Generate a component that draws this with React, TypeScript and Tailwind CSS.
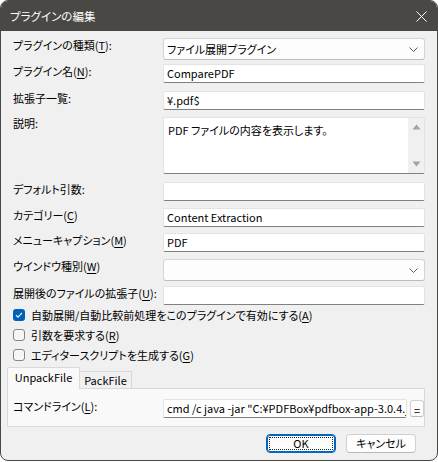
import React from "react";

const U = ({ c }: { c: string }) => <span className="underline underline-offset-[2px]">{c}</span>;

const Chevron = () => (
  <svg width="9" height="5" viewBox="0 0 9 5" className="block">
    <path d="M0.5 0.5 L4.5 4.5 L8.5 0.5" fill="none" stroke="#5a5a5a" strokeWidth="1" />
  </svg>
);

const Input = ({ value, h = "h-[19px]" }: { value?: string; h?: string }) => (
  <div
    className={`${h} w-full flex items-center overflow-hidden whitespace-nowrap rounded-[2px] border border-[#e3e3e3] border-b-[#808080] bg-white pl-[3px] leading-[15px]`}
  >
    {value}
  </div>
);

const Select = ({ value }: { value?: string }) => (
  <div className="flex h-[22px] w-full items-center justify-between rounded-[3px] border border-[#d4d4d4] border-b-[#bdbdbd] bg-[#fdfdfd] pl-[3px] pr-[6px] leading-[15px]">
    <span>{value}</span>
    <Chevron />
  </div>
);

const Row = ({ label, mt, children }: { label: React.ReactNode; mt: string; children: React.ReactNode }) => (
  <div className={`flex items-start ${mt}`}>
    <div className="w-[150px] shrink-0 leading-[15px] whitespace-nowrap">{label}</div>
    <div className="w-[262px]">{children}</div>
  </div>
);

const Check = ({ checked, children }: { checked?: boolean; children: React.ReactNode }) => (
  <div className="flex h-[20px] items-center gap-[6px] whitespace-nowrap">
    {checked ? (
      <div className="flex h-[12px] w-[12px] items-center justify-center rounded-[3px] bg-[#005fb8]">
        <svg width="10" height="10" viewBox="0 0 10 10">
          <path d="M2 5.2 L4 7.1 L8 2.9" fill="none" stroke="#fff" strokeWidth="1.1" />
        </svg>
      </div>
    ) : (
      <div className="h-[12px] w-[12px] rounded-[3px] border border-[#858585] bg-[#f6f6f6]" />
    )}
    <span className="leading-[15px]">{children}</span>
  </div>
);

export default function App() {
  return (
    <div className="h-[462px] w-[438px] bg-white font-['Noto_Sans_CJK_JP','Noto_Sans',sans-serif] text-[11px] text-black [font-feature-settings:'palt']">
      <div className="flex h-[461px] flex-col overflow-hidden rounded-[8px] border border-[#4a4845] bg-[#f0f0f0]">
        {/* Title bar */}
        <div className="flex h-[30px] shrink-0 items-center justify-between bg-[#4a4845] pl-[9px] pr-[10px] text-white">
          <span className="text-[11.5px] leading-[15px]">プラグインの編集</span>
          <svg width="11" height="11" viewBox="0 0 11 11">
            <path d="M0.5 0.5 L10.5 10.5 M10.5 0.5 L0.5 10.5" stroke="#ffffff" strokeWidth="1" />
          </svg>
        </div>

        {/* Body */}
        <div className="flex flex-col px-[12px]">
          <Row mt="mt-[7px]" label={<>プラグインの種類(<U c="T" />):</>}>
            <Select value="ファイル展開プラグイン" />
          </Row>
          <Row mt="mt-[4px]" label={<>プラグイン名(<U c="N" />):</>}>
            <Input value="ComparePDF" />
          </Row>
          <Row mt="mt-[8px]" label="拡張子一覧:">
            <Input value="¥.pdf$" />
          </Row>
          <Row mt="mt-[7px]" label={<span className="relative top-[-1px]">説明:</span>}>
            <div className="flex h-[57px] w-full rounded-[2px] border border-[#e3e3e3] border-b-[#808080] bg-white">
              <div className="flex-1 pl-[4px] pt-[5px] leading-[15px]">PDF ファイルの内容を表示します。</div>
              <div className="flex w-[16px] flex-col items-center justify-between bg-[#f0f0f0] py-[6px]">
                <svg width="9" height="6" viewBox="0 0 9 6">
                  <path d="M4.5 0.5 L8.5 5.5 L0.5 5.5 Z" fill="#a3a3a3" />
                </svg>
                <svg width="9" height="6" viewBox="0 0 9 6">
                  <path d="M0.5 0.5 L8.5 0.5 L4.5 5.5 Z" fill="#a3a3a3" />
                </svg>
              </div>
            </div>
          </Row>
          <Row mt="mt-[8px]" label="デフォルト引数:">
            <Input />
          </Row>
          <Row mt="mt-[7px]" label={<>カテゴリー(<U c="C" />)</>}>
            <Input value="Content Extraction" />
          </Row>
          <Row mt="mt-[6px]" label={<>メニューキャプション(<U c="M" />)</>}>
            <Input value="PDF" />
          </Row>
          <Row mt="mt-[7px]" label={<>ウインドウ種別(<U c="W" />)</>}>
            <Select />
          </Row>
          <Row mt="mt-[5px]" label={<>展開後のファイルの拡張子(<U c="U" />):</>}>
            <Input />
          </Row>

          <div className="flex flex-col">
            <Check checked>
              自動展開/自動比較前処理をこのプラグインで有効にする(<U c="A" />)
            </Check>
            <Check>
              引数を要求する(<U c="R" />)
            </Check>
            <Check>
              エディタースクリプトを生成する(<U c="G" />)
            </Check>
          </div>

          {/* Tabs */}
          <div className="ml-[-6px] mt-[2px] flex flex-col">
            <div className="flex items-end">
              <div className="relative z-10 mb-[-1px] flex h-[22px] w-[73px] items-center justify-center rounded-t-[2px] border border-b-0 border-[#d9d9d9] bg-[#f9f9f9] pb-[2px] leading-[15px]">
                UnpackFile
              </div>
              <div className="flex h-[17px] w-[52px] items-center justify-center border border-b-0 border-l-0 border-[#d9d9d9] bg-[#f0f0f0] leading-[15px]">
                PackFile
              </div>
            </div>
            <div className="flex h-[39px] items-start border border-[#d9d9d9] bg-[#f9f9f9] pl-[5px] pt-[10px]">
              <div className="w-[150px] shrink-0 leading-[15px] whitespace-nowrap">
                コマンドライン(<U c="L" />):
              </div>
              <div className="w-[244px] overflow-hidden">
                <Input value={'cmd /c java -jar "C:¥PDFBox¥pdfbox-app-3.0.4.jar" export:text -i "%1" -o "%2"'} />
              </div>
              <div className="ml-[3px] mt-[1px] flex h-[17px] w-[14px] items-center justify-center rounded-[3px] border border-[#d0d0d0] border-b-[#b8b8b8] bg-[#fdfdfd] pt-[2px] leading-[12px]">
                =
              </div>
            </div>
          </div>

          {/* Buttons */}
          <div className="mt-[7px] flex justify-end gap-[10px] pr-[9px]">
            <div className="flex h-[19px] w-[70px] items-center justify-center rounded-[4px] border border-[#0067c0] bg-[#fdfdfd] p-[2px] shadow-[inset_0_0_0_1px_#0067c0]">
              <div className="flex h-full w-full items-center justify-center border border-dotted border-[#222] leading-[13px]">
                OK
              </div>
            </div>
            <div className="flex h-[19px] w-[70px] items-center justify-center rounded-[4px] border border-[#d0d0d0] border-b-[#b8b8b8] bg-[#fdfdfd] leading-[15px]">
              キャンセル
            </div>
          </div>
        </div>
      </div>
    </div>
  );
}
